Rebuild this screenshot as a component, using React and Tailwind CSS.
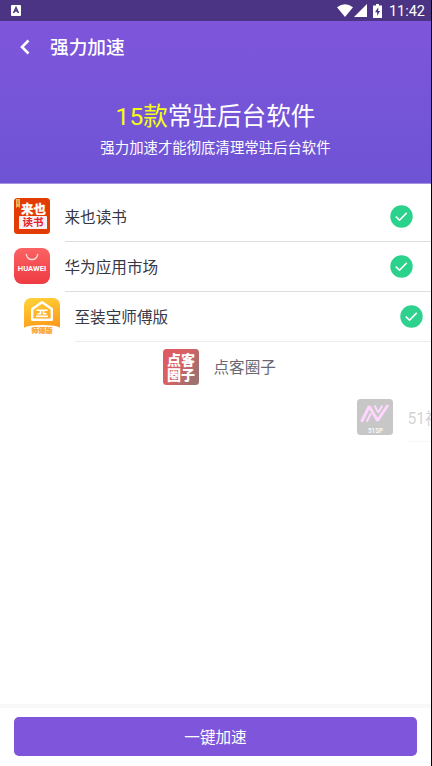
import { clsx } from "clsx";

const ReaderIcon = () => (
  <svg viewBox="0 0 36 36" className="size-9 shrink-0">
    <rect width="36" height="36" rx="3.5" fill="#e33b04" />
    <path d="M2 1h4v9l-2-1.6-2 1.6z" fill="#f0b45a" />
    <path d="M3.2 3h1.6M3.2 5h1.6" stroke="#a8621c" strokeWidth="0.7" />
    <text x="19.5" y="16.2" fontSize="12.5" fontWeight="900" fill="#fff" stroke="#fff" strokeWidth="0.2" textAnchor="middle">
      来也
    </text>
    <rect x="5" y="18" width="28" height="13" rx="0.5" fill="#f5f1f5" />
    <text x="19" y="28.4" fontSize="10.5" fontWeight="700" fill="#e6202c" textAnchor="middle">
      读书
    </text>
  </svg>
);

const HuaweiIcon = () => (
  <svg viewBox="0 0 36 36" className="size-9 shrink-0">
    <defs>
      <linearGradient id="huawei" x1="0" y1="0" x2="0" y2="1">
        <stop offset="0" stopColor="#fb6363" />
        <stop offset="1" stopColor="#ed3b42" />
      </linearGradient>
    </defs>
    <rect width="36" height="36" rx="8" fill="url(#huawei)" />
    <path d="M12.3 6.5c.8 3.4 2.9 5 5.7 5s4.9-1.6 5.7-5" fill="none" stroke="#ffd9d9" strokeWidth="1.3" strokeLinecap="round" />
    <text x="18" y="23.3" fontSize="6.5" fontWeight="700" fill="#fff" textAnchor="middle" textLength="28.5" lengthAdjust="spacingAndGlyphs">
      HUAWEI
    </text>
  </svg>
);

const MasterIcon = () => (
  <svg viewBox="0 0 36 36" className="size-9 shrink-0">
    <defs>
      <linearGradient id="master" x1="0.3" y1="0" x2="0.6" y2="1">
        <stop offset="0" stopColor="#ffcf32" />
        <stop offset="1" stopColor="#fc9a18" />
      </linearGradient>
    </defs>
    <path d="M7 0h22a7 7 0 0 1 7 7v23q-1-1.5-6-2.2-12-1.6-24 0-5 .7-6 2.2V7a7 7 0 0 1 7-7z" fill="url(#master)" />
    <path d="M8.2 11L18 4.3l9.8 6.7v10.7H8.2z" fill="none" stroke="#fff" strokeWidth="2.4" strokeLinejoin="round" />
    <path d="M12.5 12.3h11M16.5 12.3v3.4h-3M19.5 12.3v3.4h3" fill="none" stroke="#fff" strokeWidth="1.6" />
    <path d="M12 18.3h12" stroke="#fff" strokeWidth="1.7" />
    <text x="18" y="34.7" fontSize="7" fontWeight="900" fill="#fda52b" stroke="#fda52b" strokeWidth="0.2" textAnchor="middle">
      师傅版
    </text>
  </svg>
);

const CircleIcon = () => (
  <svg viewBox="0 0 36 36" className="size-9 shrink-0">
    <defs>
      <linearGradient id="circle" x1="0" y1="0" x2="1" y2="0.6">
        <stop offset="0" stopColor="#d8222b" />
        <stop offset="0.5" stopColor="#cb2c31" />
        <stop offset="1" stopColor="#7e4140" />
      </linearGradient>
    </defs>
    <rect width="36" height="36" rx="3.5" fill="url(#circle)" />
    <g fontSize="14" fontWeight="900" fill="#fff" textAnchor="middle">
      <text x="18" y="15.8">点客</text>
      <text x="18" y="31.2">圈子</text>
    </g>
  </svg>
);

const VideoIcon = () => (
  <svg viewBox="0 0 36 36" className="size-9 shrink-0">
    <rect width="36" height="36" rx="3.5" fill="#050505" />
    <g fill="none" stroke="#ff4bfa" strokeLinejoin="bevel">
      <path d="M4.5 22.7L12.2 7.5l8.3 14L31 6" strokeWidth="3" />
      <path d="M9.8 22.7l4-8.5M17.5 6.5l3.8 7 4-7" strokeWidth="2.1" />
    </g>
    <text x="18.5" y="33.7" fontSize="6.3" fontWeight="500" fill="#fff" textAnchor="middle">
      51SP
    </text>
  </svg>
);

const CheckBadge = () => (
  <svg viewBox="0 0 23 23" className="size-[23px] shrink-0">
    <circle cx="11.5" cy="11.5" r="11.2" fill="#2ad28c" />
    <path d="M5.8 11.6l3.7 3.6 7.2-7.3" fill="none" stroke="#fff" strokeWidth="1.6" />
  </svg>
);

const apps = [
  { name: "来也读书", Icon: ReaderIcon, shift: "ml-0", fade: "opacity-100" },
  { name: "华为应用市场", Icon: HuaweiIcon, shift: "ml-0", fade: "opacity-100" },
  { name: "至装宝师傅版", Icon: MasterIcon, shift: "ml-2.5", fade: "opacity-98", line: "border-[#ececf0]" },
  { name: "点客圈子", Icon: CircleIcon, shift: "ml-[149px]", fade: "opacity-75", line: "border-transparent" },
  { name: "51视频", Icon: VideoIcon, shift: "ml-[343px]", fade: "opacity-22" },
];

const AppRow = ({ name, Icon, shift, fade, line = "border-[#dedee2]" }) => (
  <li className={clsx("flex h-[50.2px] w-[431px] shrink-0", shift, fade)}>
    <div className="flex shrink-0 items-center pb-px pl-3.5">
      <Icon />
    </div>
    <div className={clsx("ml-[14.5px] flex flex-1 items-center justify-between border-b pr-[18.5px]", line)}>
      <span className="pt-[5px] text-[15.6px] whitespace-nowrap text-[#363544]">{name}</span>
      <span className="pt-px">
        <CheckBadge />
      </span>
    </div>
  </li>
);

const StatusBar = () => (
  <div className="flex h-[21px] shrink-0 items-center justify-between bg-[#4b3483] pr-1.5 pl-[11px] text-white">
    <svg viewBox="0 0 10 11" className="h-[11px] w-2.5">
      <rect width="10" height="11" rx="1" fill="#fff" />
      <path d="M2.5 8L5 2.5 7.5 8M3.5 6h3" fill="none" stroke="#4b3483" strokeWidth="1.5" />
    </svg>
    <div className="flex items-center">
      <svg viewBox="0 0 16 13" className="h-[13px] w-4" fill="currentColor">
        <path d="M8 13L0 3.2Q8-2.5 16 3.2z" />
      </svg>
      <svg viewBox="0 0 13 13" className="ml-px h-[13px] w-[13px]" fill="currentColor">
        <path d="M13 0v13H0z" />
      </svg>
      <svg viewBox="0 0 9 14" className="ml-1.5 h-3.5 w-[9px]">
        <path d="M3 0h3v1.5h3V14H0V1.5h3z" fill="#fff" />
        <path d="M5.3 3.3L2 8.3h2.2v3.6L7 6.9H5.2z" fill="#4b3483" />
      </svg>
      <span className="ml-[7px] pt-[3px] text-[14.5px] leading-none">11:42</span>
    </div>
  </div>
);

const App = () => {
  return (
    <div className="h-[766px] w-[432px] overflow-hidden bg-black pr-px font-['Roboto','Noto_Sans_CJK_SC',sans-serif]">
      <div className="flex h-full flex-col overflow-hidden bg-white">
        <StatusBar />

        {/* Header */}
        <header className="h-[163px] shrink-0 border-b border-[#a292e4] bg-linear-to-b from-[#7e55db] to-[#6e54d5] text-white">
          <div className="flex h-[52px] items-center pl-5">
            <svg viewBox="0 0 10 16" className="h-4 w-2.5">
              <path d="M8.5 1.5L2 8l6.5 6.5" fill="none" stroke="currentColor" strokeWidth="2.6" />
            </svg>
            <h1 className="ml-5 pt-0.5 text-[18.7px] font-medium">强力加速</h1>
          </div>
          <div className="pt-[26px] text-center">
            <p className="text-[24.6px] leading-9">
              <span className="text-[#f5ff14]">15款</span>常驻后台软件
            </p>
            <p className="mt-0.5 text-[14.4px] leading-6">强力加速才能彻底清理常驻后台软件</p>
          </div>
        </header>

        {/* App list */}
        <ul className="flex flex-1 flex-col overflow-hidden pt-[7.5px]">
          {apps.map((app) => (
            <AppRow key={app.name} {...app} />
          ))}
        </ul>

        {/* Footer */}
        <footer className="h-[62px] shrink-0 border-t-4 border-[#f8f8f8] px-3.5 pt-[9px]">
          <button className="h-[39px] w-full rounded-[5px] bg-[#7e55db] pt-1 text-[15.6px] text-white">
            一键加速
          </button>
        </footer>
      </div>
    </div>
  );
};

export default App;
